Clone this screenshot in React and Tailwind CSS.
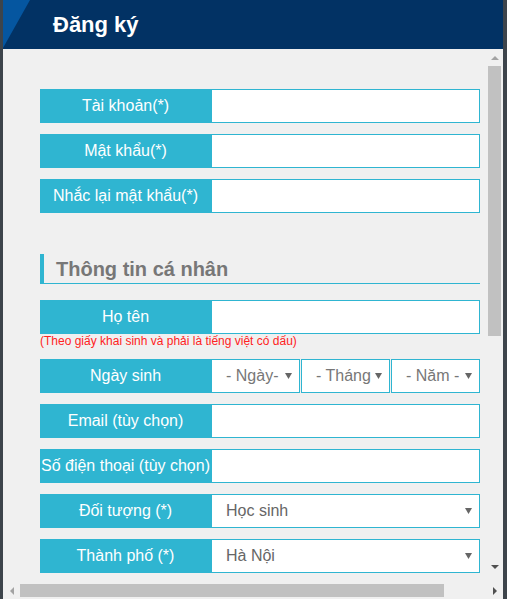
import React from 'react';

const CYAN = 'bg-[#2fb5d1]';

function Row({ label, children, className = '' }) {
  return (
    <div className={`flex h-[34px] w-[440px] ${className}`}>
      <div className={`flex w-[171px] shrink-0 items-center justify-center ${CYAN} text-[16px] text-white`}>
        {label}
      </div>
      {children}
    </div>
  );
}

function TextBox() {
  return <div className="w-[269px] border border-[#2fb5d1] bg-white" />;
}

function Caret({ className = '' }) {
  return (
    <svg width="7" height="6" viewBox="0 0 7 6" className={className}>
      <path d="M0 0h7L3.5 6z" fill="#666" />
    </svg>
  );
}

function Select({ value, className = '', textClass = 'text-[#777]' }) {
  return (
    <div className={`flex min-w-0 items-center border border-[#2fb5d1] bg-white pl-[14px] pr-[7px] ${className}`}>
      <span className={`min-w-0 flex-1 overflow-hidden whitespace-nowrap text-[16px] ${textClass}`}>{value}</span>
      <Caret className="ml-[2px] shrink-0" />
    </div>
  );
}

export default function App() {
  return (
    <div
      className="flex h-[599px] w-[507px] bg-[#3d444b] pl-[3px]"
      style={{ fontFamily: '"Liberation Sans", Arial, sans-serif' }}
    >
      <div className="flex w-[500px] shrink-0 flex-col bg-[#f0f0f0]">
        {/* header */}
        <div className="relative flex h-[49px] shrink-0 items-center overflow-hidden bg-[#023264] pl-[50px]">
          <svg width="28" height="49" viewBox="0 0 28 49" className="absolute left-0 top-0">
            <path d="M0 0h27L0 48z" fill="#0556a0" />
          </svg>
          <h1 className="relative text-[22px] font-bold text-white">Đăng ký</h1>
        </div>

        <div className="flex min-h-0 flex-1">
          {/* form content */}
          <div className="w-[484px] shrink-0 overflow-hidden pl-[37px] pt-[40px]">
            <Row label="Tài khoản(*)"><TextBox /></Row>
            <Row label="Mật khẩu(*)" className="mt-[11px]"><TextBox /></Row>
            <Row label="Nhắc lại mật khẩu(*)" className="mt-[11px]"><TextBox /></Row>

            <div className="mt-[41px] flex h-[30px] w-[440px] border-l-[4px] border-[#2fb5d1]">
              <div className="flex-1 border-b border-[#2fb5d1] pl-[12px] text-[20px] font-bold leading-[30px] text-[#777]">
                Thông tin cá nhân
              </div>
            </div>

            <Row label="Họ tên" className="mt-[16px]"><TextBox /></Row>
            <p className="h-[14px] text-[12px] leading-[14px] text-[#f22]">
              (Theo giấy khai sinh và phải là tiếng việt có dấu)
            </p>
            <Row label="Ngày sinh" className="mt-[11px]">
              <div className="flex w-[269px] gap-[1px]">
                <Select value="- Ngày-" className="w-[89px]" />
                <Select value="- Tháng -" className="w-[89px]" />
                <Select value="- Năm -" className="w-[89px]" />
              </div>
            </Row>
            <Row label="Email (tùy chọn)" className="mt-[11px]"><TextBox /></Row>
            <Row label="Số điện thoại (tùy chọn)" className="mt-[11px]"><TextBox /></Row>
            <Row label="Đối tượng (*)" className="mt-[11px]">
              <Select value="Học sinh" className="w-[269px]" textClass="text-[#666]" />
            </Row>
            <Row label="Thành phố (*)" className="mt-[11px]">
              <Select value="Hà Nội" className="w-[269px]" textClass="text-[#666]" />
            </Row>
          </div>

          {/* vertical scrollbar */}
          <div className="flex w-[16px] shrink-0 flex-col">
            <div className="flex h-[17px] items-center justify-center">
              <svg width="8" height="4" viewBox="0 0 8 4"><path d="M4 0l4 4H0z" fill="#a3a3a3" /></svg>
            </div>
            <div className="ml-[1px] h-[270px] w-[13px] bg-[#c1c1c1]" />
            <div className="flex-1" />
            <div className="flex h-[20px] items-start justify-center pt-[2px]">
              <svg width="8" height="4" viewBox="0 0 8 4"><path d="M0 0h8L4 4z" fill="#505050" /></svg>
            </div>
          </div>
        </div>

        {/* horizontal scrollbar */}
        <div className="flex h-[16px] shrink-0 items-start pt-[1px]">
          <div className="flex h-[13px] w-[17px] items-center justify-center">
            <svg width="4" height="8" viewBox="0 0 4 8"><path d="M4 0v8L0 4z" fill="#a3a3a3" /></svg>
          </div>
          <div className="h-[13px] w-[424px] bg-[#c1c1c1]" />
          <div className="flex-1" />
          <div className="flex h-[13px] w-[16px] items-center justify-center">
            <svg width="4" height="8" viewBox="0 0 4 8"><path d="M0 0l4 4-4 4z" fill="#505050" /></svg>
          </div>
        </div>
      </div>
    </div>
  );
}
